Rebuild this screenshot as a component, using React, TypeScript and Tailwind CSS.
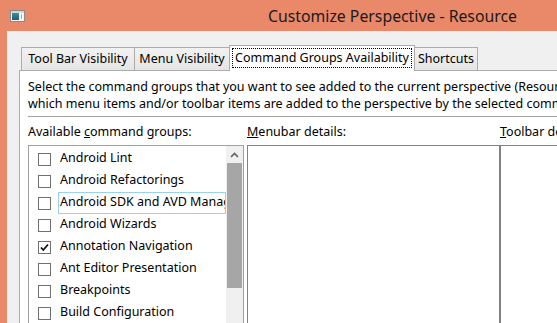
import React from "react";

const items = [
  "Android Lint",
  "Android Refactorings",
  "Android SDK and AVD Manager",
  "Android Wizards",
  "Annotation Navigation",
  "Ant Editor Presentation",
  "Breakpoints",
  "Build Configuration",
  "C/C++ Editor",
];

function AppIcon() {
  return (
    <svg width="15" height="12" viewBox="0 0 15 12">
      <rect x="0.5" y="0.5" width="14" height="11" fill="#f4f4f4" stroke="#8a8a8a" />
      <rect x="1" y="1" width="13" height="2" fill="#cfd6dc" />
      <defs>
        <linearGradient id="g1" x1="0" y1="0" x2="0" y2="1">
          <stop offset="0" stopColor="#3a8f94" />
          <stop offset="1" stopColor="#1f5f7a" />
        </linearGradient>
      </defs>
      <rect x="2" y="3" width="7" height="7" fill="url(#g1)" />
      <rect x="10" y="3" width="3" height="7" fill="#ffffff" />
      <line x1="11.5" y1="4" x2="11.5" y2="9" stroke="#9aa7b0" />
    </svg>
  );
}

function Check() {
  return (
    <svg width="11" height="11" viewBox="0 0 11 11">
      <path d="M2 5.5 L4.3 8 L9 2.5" fill="none" stroke="#111" strokeWidth="1.8" />
    </svg>
  );
}

export default function App() {
  return (
    <div
      className="w-[557px] h-[323px] overflow-hidden bg-[#E9896A] flex flex-col text-black"
      style={{ fontFamily: '"Noto Sans", "Open Sans", sans-serif' }}
    >
      {/* title bar */}
      <div className="h-[31px] shrink-0 flex items-center">
        <div className="ml-[10px] mt-[1px]">
          <AppIcon />
        </div>
        <div className="ml-[243px] text-[15.8px] leading-[20px] text-[#1a1a1a] whitespace-nowrap">
          Customize Perspective - Resource
        </div>
      </div>

      {/* client */}
      <div className="flex-1 ml-[7px] bg-[#F0F0F0] pt-[14px] pl-[12px] flex flex-col min-h-0">
        {/* tabs */}
        <div className="flex items-end h-[25px] pl-[2px] text-[12.5px]">
          <div className="w-[114px] shrink-0 h-[23px] border border-b-0 border-[#ACACAC] bg-gradient-to-b from-[#F2F2F2] to-[#E5E5E5] flex items-center justify-center whitespace-nowrap">
            Tool Bar Visibility
          </div>
          <div className="ml-[-1px] shrink-0 w-[96px] h-[23px] border border-b-0 border-[#ACACAC] bg-gradient-to-b from-[#F2F2F2] to-[#E5E5E5] flex items-center justify-center whitespace-nowrap">
            Menu Visibility
          </div>
          <div className="relative z-10 shrink-0 ml-[-1px] mb-[-1px] w-[186px] h-[26px] border border-b-0 border-[#ACACAC] bg-white px-[2px] pt-[2px]">
            <div className="h-[20px] border border-dotted border-black flex items-center justify-center whitespace-nowrap">
              Command Groups Availability
            </div>
          </div>
          <div className="ml-[-1px] shrink-0 w-[64px] h-[23px] border border-b-0 border-[#ACACAC] bg-gradient-to-b from-[#F2F2F2] to-[#E5E5E5] flex items-center justify-center whitespace-nowrap">
            Shortcuts
          </div>
        </div>

        {/* panel */}
        <div className="flex-1 min-h-0 bg-white border-l border-t border-[#ACACAC] pl-[8px] pt-[7px] text-[12.5px] overflow-hidden">
          <div className="leading-[17px] whitespace-nowrap">
            Select the command groups that you want to see added to the current perspective (Resource). The details field identifies
            <br />
            which menu items and/or toolbar items are added to the perspective by the selected command group.
          </div>
          <div className="mt-[4px] h-px bg-[#A0A0A0]" />
          <div className="mt-[6px] h-[17px] leading-[17px] flex whitespace-nowrap">
            <div className="w-[219px] shrink-0">
              Available <span className="underline">c</span>ommand groups:
            </div>
            <div className="w-[253px] shrink-0">
              <span className="underline">M</span>enubar details:
            </div>
            <div className="shrink-0">
              <span className="underline">T</span>oolbar details:
            </div>
          </div>
          <div className="mt-[5px] flex h-[200px]">
            {/* list */}
            <div className="w-[216px] shrink-0 h-full border border-[#A0A0A0] flex">
              <div className="flex-1 min-w-0 pt-[2px] overflow-hidden">
                {items.map((t, i) => (
                  <div key={t} className="h-[22px] flex items-center pl-[9px]">
                    <div className="w-[13px] h-[13px] shrink-0 border border-[#707070] bg-white flex items-center justify-center">
                      {i === 4 ? <Check /> : null}
                    </div>
                    <div
                      className={
                        "ml-[7px] h-[22px] flex items-center px-[1px] whitespace-nowrap overflow-hidden flex-1 min-w-0 pb-[1px] " +
                        (i === 2 ? "border border-[#99D1EE]" : "border border-transparent")
                      }
                    >
                      {t}
                    </div>
                  </div>
                ))}
              </div>
              <div className="w-[17px] shrink-0 bg-[#F0F0F0] flex flex-col">
                <div className="h-[17px] flex items-center justify-center">
                  <svg width="9" height="6" viewBox="0 0 9 6">
                    <path d="M1 5 L4.5 1.5 L8 5" fill="none" stroke="#606060" strokeWidth="1.6" />
                  </svg>
                </div>
                <div className="mx-[1px] h-[125px] bg-[#A6A6A6]" />
              </div>
            </div>
            {/* menubar */}
            <div className="ml-[3px] shrink-0 w-[253px] h-full border border-[#828282]" />
            {/* toolbar */}
            <div className="flex-1 h-full border-l border-t border-[#828282]" />
          </div>
        </div>
      </div>
    </div>
  );
}
